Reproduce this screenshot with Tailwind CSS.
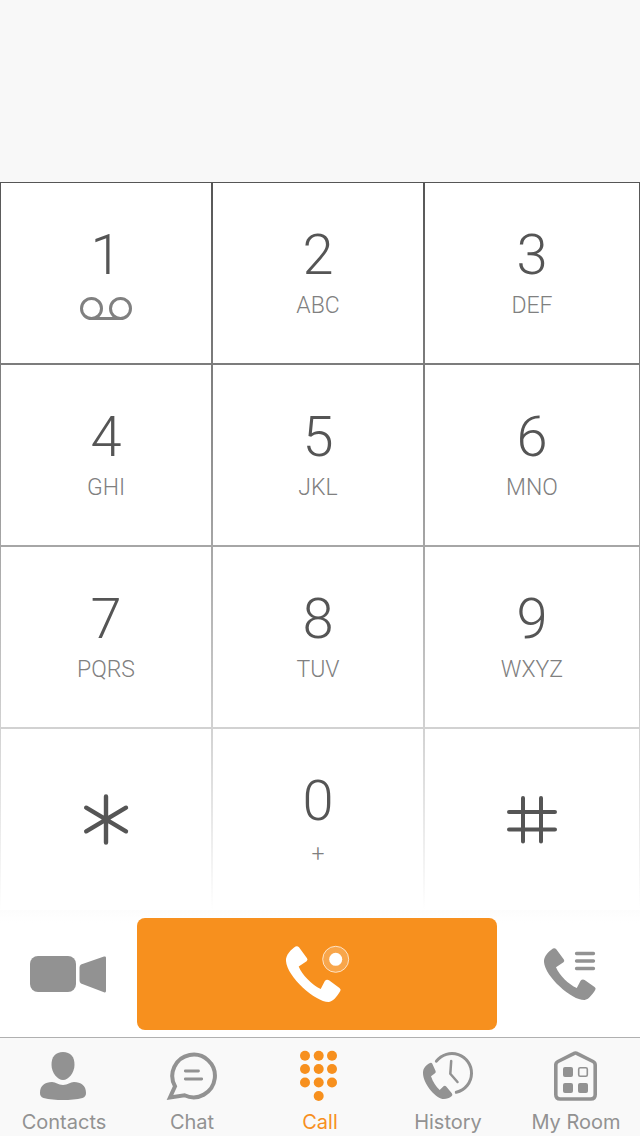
<!DOCTYPE html>
<html lang="en">
<head>
  <meta charset="UTF-8" />
  <meta name="viewport" content="width=device-width, initial-scale=1.0"/>
  <title>Call</title>
  <script src="https://cdn.jsdelivr.net/npm/@tailwindcss/browser@4"></script>
</head>
<body class="min-h-screen flex flex-col bg-white font-['Roboto','Liberation_Sans',sans-serif]">

  <!-- Number display -->
  <header class="flex-1 min-h-24 flex bg-[#f8f8f8]">
    <input type="tel" aria-label="Phone number" class="w-full px-6 text-center text-5xl font-light text-[#555] outline-none" />
  </header>

  <!-- Keypad: the lines are the gradient showing through the gaps -->
  <main class="grid grid-cols-[210fr_210fr_214fr] auto-rows-[180px] gap-0.5 p-px bg-linear-to-b from-[#555] to-white text-[#555] font-light">
    <button class="flex flex-col items-center pt-11 bg-white">
      <span class="text-[56px] leading-14">1</span>
      <svg class="mt-3.5 w-[52px] h-6" viewBox="0 0 52 24" fill="none" stroke="#808080" stroke-width="3" role="img" aria-label="Voicemail">
        <circle cx="11.5" cy="11.5" r="10" />
        <circle cx="40.5" cy="11.5" r="10" />
        <path d="M11 21.5H41" />
      </svg>
    </button>
    <button class="flex flex-col items-center pt-11 bg-white">
      <span class="text-[56px] leading-14">2</span>
      <span class="mt-[9px] text-[23px] leading-7 text-[#808080]">ABC</span>
    </button>
    <button class="flex flex-col items-center pt-11 bg-white">
      <span class="text-[56px] leading-14">3</span>
      <span class="mt-[9px] text-[23px] leading-7 text-[#808080]">DEF</span>
    </button>
    <button class="flex flex-col items-center pt-11 bg-white">
      <span class="text-[56px] leading-14">4</span>
      <span class="mt-[9px] text-[23px] leading-7 text-[#808080]">GHI</span>
    </button>
    <button class="flex flex-col items-center pt-11 bg-white">
      <span class="text-[56px] leading-14">5</span>
      <span class="mt-[9px] text-[23px] leading-7 text-[#808080]">JKL</span>
    </button>
    <button class="flex flex-col items-center pt-11 bg-white">
      <span class="text-[56px] leading-14">6</span>
      <span class="mt-[9px] text-[23px] leading-7 text-[#808080]">MNO</span>
    </button>
    <button class="flex flex-col items-center pt-11 bg-white">
      <span class="text-[56px] leading-14">7</span>
      <span class="mt-[9px] text-[23px] leading-7 text-[#808080]">PQRS</span>
    </button>
    <button class="flex flex-col items-center pt-11 bg-white">
      <span class="text-[56px] leading-14">8</span>
      <span class="mt-[9px] text-[23px] leading-7 text-[#808080]">TUV</span>
    </button>
    <button class="flex flex-col items-center pt-11 bg-white">
      <span class="text-[56px] leading-14">9</span>
      <span class="mt-[9px] text-[23px] leading-7 text-[#808080]">WXYZ</span>
    </button>
    <button class="flex items-center justify-center bg-white" aria-label="Star">
      <svg class="w-13 h-13" viewBox="0 0 52 52" stroke="#555" stroke-width="4.4" stroke-linecap="round">
        <path d="M26 3.5V49.5M6.2 14.7L46 38.3M46 14.7L6.2 38.3" />
      </svg>
    </button>
    <button class="flex flex-col items-center pt-11 bg-white">
      <span class="text-[56px] leading-14">0</span>
      <span class="mt-3 text-[23px] leading-7 text-[#808080]">+</span>
    </button>
    <button class="flex items-center justify-center bg-white" aria-label="Hash">
      <svg class="w-13 h-13" viewBox="0 0 52 52" stroke="#555" stroke-width="4" stroke-linecap="round">
        <path d="M17 5V48.5M35 5V48.5M3 19H49M3 36.5H49" />
      </svg>
    </button>
  </main>

  <!-- Call actions -->
  <section class="grid grid-cols-[137fr_360fr_143fr] pt-2 pb-[7px] bg-linear-to-b from-[#fcfcfc] to-white to-10%">
    <button class="flex items-center justify-center" aria-label="Video call">
      <svg class="w-19 h-9 overflow-visible" viewBox="1 0 76 36" fill="#929292">
        <rect width="46" height="36" rx="8" />
        <path d="M51 8.6L74 .6Q76 0 76 1.8V35Q76 37 74 36.2L51 27.5Q49.5 26.5 49.5 24.5V11.5Q49.5 9.5 51 8.6Z" />
      </svg>
    </button>
    <button class="h-28 flex items-center justify-center rounded-lg bg-[#f7901e]" aria-label="Call">
      <svg class="w-16 h-14 overflow-visible" viewBox="-1 0 64 56" fill="white">
        <path id="handset" d="M0 15C-.5 9 5 3.5 9.5.5Q11.5-.5 13 1.3L21 12.3Q22.2 14 20.6 15.3L12.7 20.6C16 29 26 39 34.7 43L38.7 35.3Q40.5 33 43 34.3L53.5 42Q55.3 43.3 54.3 45C51 50.5 47 55.5 43 56C30 56.5 1 31 0 15Z" />
        <circle cx="49.7" cy="13.3" r="13" fill-opacity=".2" stroke="white" stroke-opacity=".7" />
        <circle cx="49.7" cy="13.3" r="6.5" />
      </svg>
    </button>
    <button class="flex items-center justify-center" aria-label="Call options">
      <svg class="w-13 h-13 overflow-visible" viewBox="-1 0 52 52" fill="#929292">
        <use href="#handset" transform="scale(.945 .93)" />
        <path d="M32.5 5.5H49.5M32.5 13H49.5M32.5 20.5H49.5" stroke="#929292" stroke-width="3.3" stroke-linecap="round" />
      </svg>
    </button>
  </section>

  <!-- Tab bar -->
  <nav class="grid grid-cols-5 border-t border-[#b0b0b0] bg-[#f9f9f9] pt-3 pb-0.5 font-['Inter','Liberation_Sans',sans-serif] text-xl leading-6 text-[#929292]">
    <a href="#contacts" class="flex flex-col items-center gap-2">
      <svg class="w-14 h-13" viewBox="1 0 56 52" fill="currentColor">
        <path d="M28 2C35.5 2 39.7 7 39.5 15C39.3 23 33.5 30 28 30S16.7 23 16.5 15C16.3 7 20.5 2 28 2Z" />
        <path d="M17 32C21 32 23 35 28 35S35 32 39 32C46 32 51 35.5 51 43C51 45.5 50 47 47.5 48C36 50.7 20 50.7 8.5 48C6 47 5 45.5 5 43C5 35.5 10 32 17 32Z" />
      </svg>
      Contacts
    </a>
    <a href="#chat" class="flex flex-col items-center gap-2">
      <svg class="w-14 h-13" viewBox="1 0 56 52" fill="none" stroke="currentColor">
        <path d="M12 36.3A21.3 21.3 0 1 1 21.5 45.2L7 47.5L12 36.3Z" stroke-width="4" />
        <path d="M22.3 21H35.5M22.3 29H38.7" stroke-width="2.8" stroke-linecap="round" />
      </svg>
      Chat
    </a>
    <a href="#call" aria-current="page" class="flex flex-col items-center gap-2 text-[#f7901e]">
      <svg class="w-14 h-13" viewBox="1 0 56 52" fill="currentColor">
        <circle cx="14" cy="5.7" r="5" />
        <circle cx="27.7" cy="5.7" r="5" />
        <circle cx="41" cy="5.7" r="5" />
        <circle cx="14" cy="19" r="5" />
        <circle cx="27.7" cy="19" r="5" />
        <circle cx="41" cy="19" r="5" />
        <circle cx="14" cy="32.5" r="5" />
        <circle cx="27.7" cy="32.5" r="5" />
        <circle cx="41" cy="32.5" r="5" />
        <circle cx="27.7" cy="46" r="5" />
      </svg>
      Call
    </a>
    <a href="#history" class="flex flex-col items-center gap-2">
      <svg class="w-14 h-13" viewBox="1 0 56 52" fill="none" stroke="currentColor" stroke-linecap="round">
        <path d="M17.4 11.2A19.6 19.6 0 0 1 52.5 23.5A19.6 19.6 0 0 1 37.3 42.3" stroke-width="3" />
        <path d="M32.2 11L31.3 23.8L38.5 32" stroke-width="2.5" stroke-linejoin="round" />
        <path d="M4 23C4 18 7 15 11 13Q12.5 12.2 13.3 13.8L16.6 21Q17.2 22.5 16 23.3L12 26.3C14 32 17 37 20.7 40L24.5 36.2Q26 35 27.2 36.5L33 43.5Q34 45 32.5 46.2C30 48.2 27 49.3 23.5 48.9C15 47 4 33 4 23Z" fill="currentColor" stroke="none" />
      </svg>
      History
    </a>
    <a href="#room" class="flex flex-col items-center gap-2">
      <svg class="w-14 h-13" viewBox="1 0 56 52" fill="currentColor">
        <path d="M26.7 3.6Q28.5 2.5 30.3 3.6L46 11.5Q48.2 12.6 48.2 15V44.5Q48.2 49 43.7 49H13.3Q8.8 49 8.8 44.5V15Q8.8 12.6 11 11.5Z" fill="none" stroke="currentColor" stroke-width="3.6" />
        <rect x="16" y="17" width="10" height="10" rx="2" />
        <rect x="31.7" y="17.7" width="8.6" height="8.6" rx="1.5" fill="none" stroke="currentColor" stroke-width="1.6" />
        <rect x="16" y="33" width="10" height="10" rx="2" />
        <rect x="31" y="33" width="10" height="10" rx="2" />
      </svg>
      My Room
    </a>
  </nav>

</body>
</html>
